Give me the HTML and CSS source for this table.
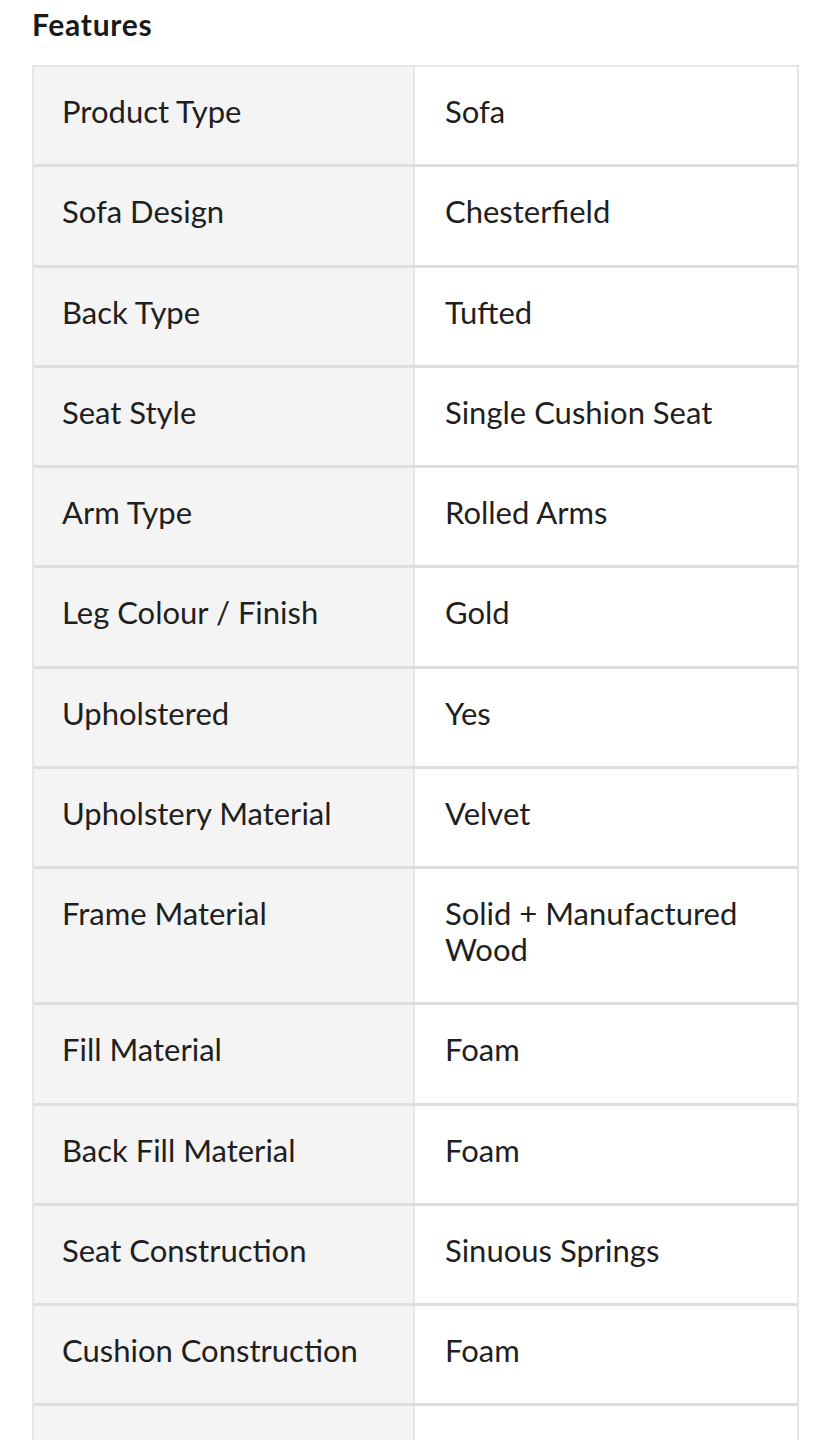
FILE: index.html
```html
<!DOCTYPE html>
<html>
<head>
<meta charset="utf-8">
<link rel="stylesheet" href="styles.css">
</head>
<body>
<h2 class="title">Features</h2>
<div class="specs">
  <div class="row"><div class="key">Product Type</div><div class="val">Sofa</div></div>
  <div class="row"><div class="key">Sofa Design</div><div class="val">Chesterfield</div></div>
  <div class="row"><div class="key">Back Type</div><div class="val">Tufted</div></div>
  <div class="row"><div class="key">Seat Style</div><div class="val">Single Cushion Seat</div></div>
  <div class="row"><div class="key">Arm Type</div><div class="val">Rolled Arms</div></div>
  <div class="row"><div class="key">Leg Colour / Finish</div><div class="val">Gold</div></div>
  <div class="row"><div class="key">Upholstered</div><div class="val">Yes</div></div>
  <div class="row"><div class="key">Upholstery Material</div><div class="val">Velvet</div></div>
  <div class="row"><div class="key">Frame Material</div><div class="val">Solid + Manufactured Wood</div></div>
  <div class="row"><div class="key">Fill Material</div><div class="val">Foam</div></div>
  <div class="row"><div class="key">Back Fill Material</div><div class="val">Foam</div></div>
  <div class="row"><div class="key">Seat Construction</div><div class="val">Sinuous Springs</div></div>
  <div class="row"><div class="key">Cushion Construction</div><div class="val">Foam</div></div>
  <div class="row"><div class="key empty"></div><div class="val empty"></div></div>
</div>
</body>
</html>
```
FILE: styles.css
```css
html, body {
  margin: 0;
  padding: 0;
  background: #ffffff;
}
body {
  font-family: "Lato", "Liberation Sans", sans-serif;
  color: #1f1f1f;
  padding: 0 32px;
}
.title {
  margin: 0;
  padding-top: 6px;
  height: 65px;
  box-sizing: border-box;
  font-size: 30px;
  line-height: 36px;
  font-weight: 700;
  letter-spacing: 0.7px;
  color: #1a1a1a;
}
.specs {
  width: 767px;
  box-sizing: border-box;
  border-top: 2px solid #e6e6e8;
  border-left: 2px solid #e6e6e8;
  border-right: 2px solid #e6e6e8;
}
.row {
  display: grid;
  grid-template-columns: 381px 1fr;
  border-bottom: 3px solid #dedee2;
}
.key, .val {
  padding: 26px 30px 35.25px;
  font-size: 31px;
  line-height: 36px;
}
.key {
  padding-left: 28px;
  background: #f4f4f4;
  border-right: 2px solid #e6e6e8;
}
.val {
  background: #ffffff;
}
.empty {
  min-height: 36px;
}
```
